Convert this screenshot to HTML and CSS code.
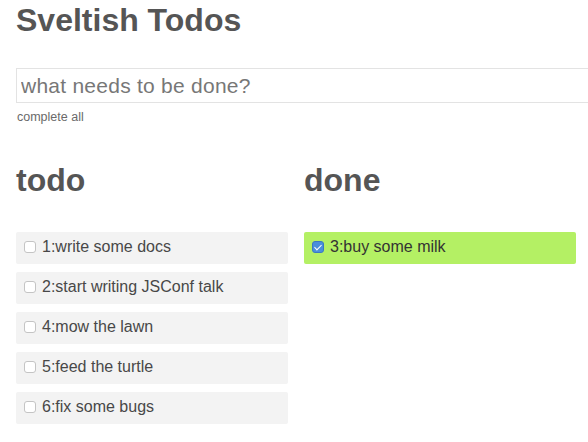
FILE: index.html
```html
<!DOCTYPE html>
<html lang="en">
<head>
<meta charset="utf-8">
<title>Sveltish Todos</title>
<link rel="stylesheet" href="styles.css">
</head>
<body>
<main class="board">
  <h1 class="title">Sveltish Todos</h1>
  <input class="new-todo" type="text" placeholder="what needs to be done?">
  <div class="complete-all">complete all</div>
  <div class="columns">
    <section class="column">
      <h2 class="heading">todo</h2>
      <label class="item"><input class="check" type="checkbox"><span>1:write some docs</span></label>
      <label class="item"><input class="check" type="checkbox"><span>2:start writing JSConf talk</span></label>
      <label class="item"><input class="check" type="checkbox"><span>4:mow the lawn</span></label>
      <label class="item"><input class="check" type="checkbox"><span>5:feed the turtle</span></label>
      <label class="item"><input class="check" type="checkbox"><span>6:fix some bugs</span></label>
    </section>
    <section class="column">
      <h2 class="heading">done</h2>
      <label class="item item-done"><input class="check" type="checkbox" checked><span>3:buy some milk</span></label>
    </section>
  </div>
</main>
</body>
</html>
```

FILE: styles.css
```css
html, body {
  margin: 0;
  padding: 0;
  overflow: hidden;
  background: #fff;
}

body {
  font-family: "Liberation Sans", Arial, sans-serif;
  color: #555;
}

.board {
  padding: 0 0 0 16px;
}

.title {
  margin: 0;
  font-size: 32px;
  line-height: 40px;
  font-weight: bold;
  color: #555;
}

.new-todo {
  display: block;
  box-sizing: border-box;
  margin: 28px 0 0 0;
  width: 600px;
  height: 35px;
  padding: 0 4px;
  border: 1px solid #e3e3e3;
  border-radius: 0;
  font-family: "Liberation Sans", Arial, sans-serif;
  font-size: 21px;
  letter-spacing: 0.25px;
  color: #444;
  outline: none;
  background: #fff;
}

.new-todo::placeholder {
  color: #777;
}

.complete-all {
  margin-top: 7px;
  padding-left: 1px;
  font-size: 12.5px;
  line-height: 14px;
  color: #6a6a6a;
}

.columns {
  display: grid;
  grid-template-columns: 272px 272px;
  column-gap: 16px;
  margin-top: 36px;
}

.heading {
  margin: 0 0 32px 0;
  font-size: 32px;
  line-height: 40px;
  font-weight: bold;
  color: #555;
}

.item {
  display: flex;
  align-items: center;
  gap: 6px;
  height: 32px;
  box-sizing: border-box;
  padding: 7px 8px 9px 8px;
  margin-bottom: 8px;
  background: #f3f3f3;
  border-radius: 2px;
  font-size: 16px;
  line-height: 16px;
  color: #484848;
}

.item-done {
  background: rgb(180, 240, 100);
  color: #333;
}

.check {
  -webkit-appearance: none;
  appearance: none;
  position: relative;
  margin: 0;
  width: 12px;
  height: 12px;
  box-sizing: border-box;
  border: 1px solid #c4c4c4;
  border-radius: 3px;
  background: #fff;
  flex: none;
}

.check:checked {
  background: #4a8fdc;
  border-color: #3a78c4;
}

.check:checked::after {
  content: "";
  position: absolute;
  left: 3px;
  top: 1px;
  width: 3px;
  height: 6px;
  border: solid #fff;
  border-width: 0 1.5px 1.5px 0;
  transform: rotate(45deg);
}
```
